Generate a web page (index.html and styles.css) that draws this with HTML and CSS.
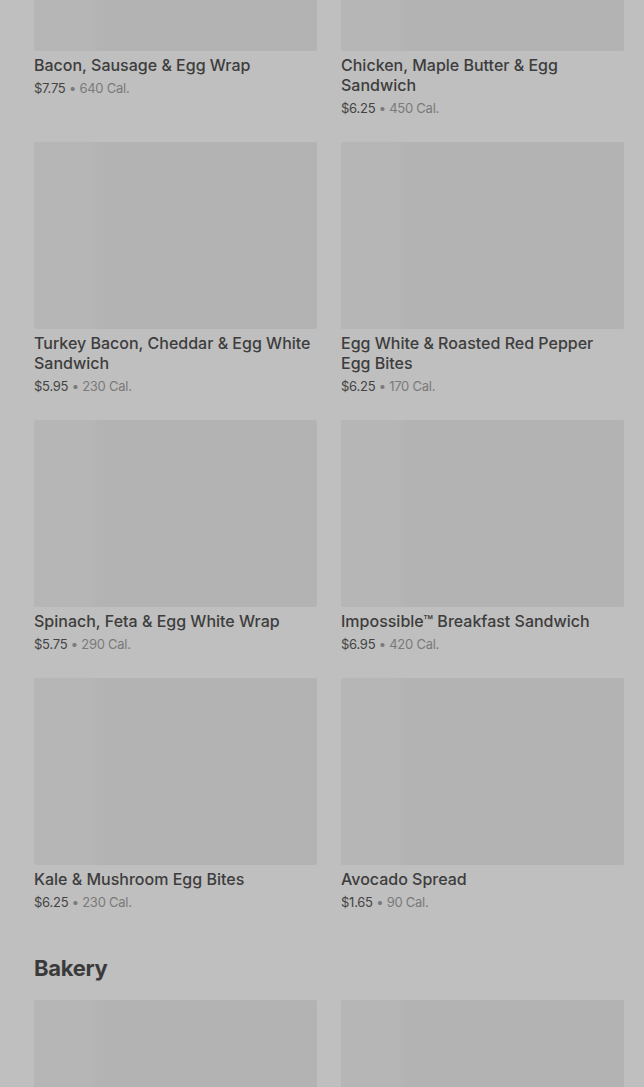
FILE: index.html
```html
<!DOCTYPE html>
<html>
<head>
  <title>Menu</title>
  <link rel="stylesheet" href="styles.css">
</head>
<body>
  <div class="menu">
    <section class="category">
      <div class="product-grid">
        <div class="product">
          <div class="product-image"></div>
          <div class="product-name">Bacon, Sausage &amp; Egg Wrap</div>
          <div class="product-meta"><span class="price">$7.75</span> • 640 Cal.</div>
        </div>
        <div class="product">
          <div class="product-image"></div>
          <div class="product-name">Chicken, Maple Butter &amp; Egg Sandwich</div>
          <div class="product-meta"><span class="price">$6.25</span> • 450 Cal.</div>
        </div>
        <div class="product">
          <div class="product-image"></div>
          <div class="product-name">Turkey Bacon, Cheddar &amp; Egg White Sandwich</div>
          <div class="product-meta"><span class="price">$5.95</span> • 230 Cal.</div>
        </div>
        <div class="product">
          <div class="product-image"></div>
          <div class="product-name">Egg White &amp; Roasted Red Pepper Egg Bites</div>
          <div class="product-meta"><span class="price">$6.25</span> • 170 Cal.</div>
        </div>
        <div class="product">
          <div class="product-image"></div>
          <div class="product-name">Spinach, Feta &amp; Egg White Wrap</div>
          <div class="product-meta"><span class="price">$5.75</span> • 290 Cal.</div>
        </div>
        <div class="product">
          <div class="product-image"></div>
          <div class="product-name">Impossible™ Breakfast Sandwich</div>
          <div class="product-meta"><span class="price">$6.95</span> • 420 Cal.</div>
        </div>
        <div class="product">
          <div class="product-image"></div>
          <div class="product-name">Kale &amp; Mushroom Egg Bites</div>
          <div class="product-meta"><span class="price">$6.25</span> • 230 Cal.</div>
        </div>
        <div class="product">
          <div class="product-image"></div>
          <div class="product-name">Avocado Spread</div>
          <div class="product-meta"><span class="price">$1.65</span> • 90 Cal.</div>
        </div>
      </div>
    </section>

    <section class="category">
      <h2>Bakery</h2>
      <div class="product-grid">
        <div class="product">
          <div class="product-image"></div>
        </div>
        <div class="product">
          <div class="product-image"></div>
        </div>
      </div>
    </section>
  </div>
</body>
</html>
```

FILE: styles.css
```css
html, body {
  margin: 0;
  padding: 0;
  background-color: #bfbfbf;
  font-family: Inter, "Liberation Sans", Arial, sans-serif;
  color: #3d3d3d;
  overflow: hidden;
}

.menu {
  /* page is scrolled down into the list */
  margin-top: -136px;
  padding: 0 20px 0 34px;
}

.category {
  margin-bottom: 43px;
}

.category h2 {
  margin: 0 0 18px;
  font-size: 22px;
  line-height: 28px;
  font-weight: 700;
  letter-spacing: -0.3px;
  color: #3a3a3a;
}

.product-grid {
  display: grid;
  grid-template-columns: 1fr 1fr;
  column-gap: 24px;
  row-gap: 25px;
}

.product-image {
  height: 187px;
  border-radius: 2px;
  background-color: #b3b3b3;
  background-image: linear-gradient(90deg, #b6b6b6 0, #b6b6b6 20%, #b3b3b3 23%, #b3b3b3 100%);
}

.product-name {
  margin-top: 4px;
  font-size: 16px;
  line-height: 20px;
  font-weight: 500;
  color: #3d3d3d;
}

.product-meta {
  margin-top: 4px;
  font-size: 13px;
  line-height: 18px;
  color: #7a7a7a;
  letter-spacing: -0.25px;
}

.product-meta .price {
  color: #444;
}
```
